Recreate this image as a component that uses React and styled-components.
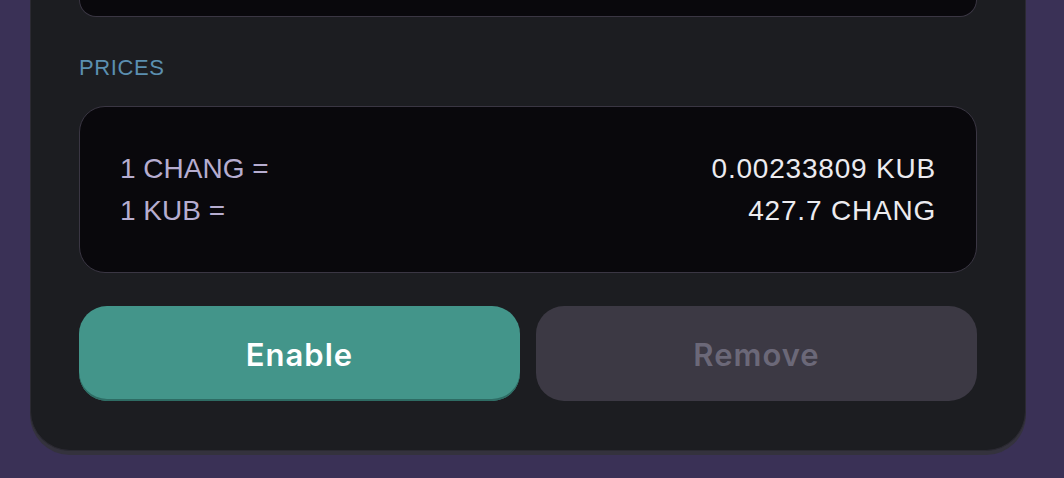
import React from 'react';
import styled, { createGlobalStyle } from 'styled-components';

const GlobalStyle = createGlobalStyle`
  html, body {
    margin: 0;
    padding: 0;
    background: #3a3156;
    overflow: hidden;
  }
  body {
    font-family: "Liberation Sans", Arial, sans-serif;
  }
`;

const Page = styled.div`
  height: 478px;
  box-sizing: border-box;
  padding: 0 38px 0 30px;
  background: #3a3156;
`;

const Card = styled.div`
  box-sizing: border-box;
  width: 996px;
  padding: 0 48px 49px;
  background: #1c1d21;
  border: 1px solid #2b2a32;
  border-top: none;
  border-radius: 0 0 40px 40px;
  box-shadow: 0 4px 0 #34323d;
  display: flex;
  flex-direction: column;
`;

const TopBox = styled.div`
  height: 16px;
  background: #09080c;
  border: 1px solid #3a3643;
  border-top: none;
  border-radius: 0 0 28px 28px;
`;

const SectionLabel = styled.div`
  margin: 38px 0 25px 0;
  font-size: 22px;
  line-height: 26px;
  color: #5b8fb0;
  letter-spacing: 0.6px;
`;

const PriceBox = styled.div`
  background: #09080c;
  border: 1px solid #3a3643;
  border-radius: 26px;
  padding: 41px 40px 40px;
  display: flex;
  flex-direction: column;
`;

const PriceRow = styled.div`
  display: flex;
  justify-content: space-between;
  font-size: 28px;
  line-height: 42px;
`;

const PriceLabel = styled.span`
  color: #b6add0;
`;

const PriceValue = styled.span`
  color: #ecebf0;
  letter-spacing: 0.8px;
`;

const ButtonRow = styled.div`
  margin-top: 33px;
  display: grid;
  grid-template-columns: 1fr 1fr;
  gap: 16px;
`;

const Button = styled.button`
  height: 95px;
  border: none;
  border-radius: 28px;
  font-family: Inter, "Liberation Sans", Arial, sans-serif;
  font-weight: 600;
  font-size: 31px;
  letter-spacing: 1px;
  padding-top: 2px;
  cursor: ${(p) => (p.disabled ? 'default' : 'pointer')};
  background: ${(p) => (p.primary ? '#43958a' : '#3c3944')};
  color: ${(p) => (p.primary ? '#ffffff' : '#6b6878')};
  box-shadow: ${(p) => (p.primary ? 'inset 0 -2px 0 #2e6c64' : 'none')};
`;

const prices = [
  { label: '1 CHANG =', value: '0.00233809 KUB' },
  { label: '1 KUB =', value: '427.7 CHANG' },
];

export default function App() {
  return (
    <>
      <GlobalStyle />
      <Page>
        <Card>
          <TopBox />
          <SectionLabel>PRICES</SectionLabel>
          <PriceBox>
            {prices.map((p) => (
              <PriceRow key={p.label}>
                <PriceLabel>{p.label}</PriceLabel>
                <PriceValue>{p.value}</PriceValue>
              </PriceRow>
            ))}
          </PriceBox>
          <ButtonRow>
            <Button primary>Enable</Button>
            <Button disabled>Remove</Button>
          </ButtonRow>
        </Card>
      </Page>
    </>
  );
}
